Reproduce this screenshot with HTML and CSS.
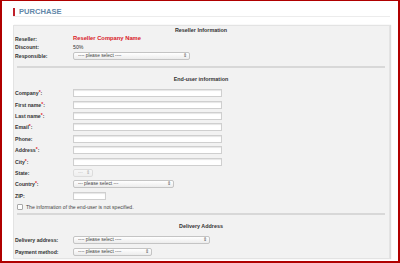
FILE: index.html
```html
<!DOCTYPE html>
<html lang="en">
<head>
    <meta charset="UTF-8">
    <title>Purchase</title>
    <link rel="stylesheet" href="styles.css">
</head>
<body>
    <div class="frame">
        <h1 class="page-title">PURCHASE</h1>
        <form class="panel">
            <h2 class="section-title first">Reseller Information</h2>
            <div class="rows rows-tight">
                <label>Reseller:</label>
                <span class="reseller">Reseller Company Name</span>
                <label>Discount:</label>
                <span class="value">50%</span>
                <label>Responsible:</label>
                <span class="sel w-resp"><select><option>---- please select ----</option></select></span>
            </div>

            <hr class="sep">

            <h2 class="section-title">End-user information</h2>
            <div class="rows">
                <label>Company<em>*</em>:</label>
                <input type="text" class="txt">
                <label>First name<em>*</em>:</label>
                <input type="text" class="txt">
                <label>Last name<em>*</em>:</label>
                <input type="text" class="txt">
                <label>Email<em>*</em>:</label>
                <input type="text" class="txt">
                <label>Phone:</label>
                <input type="text" class="txt">
                <label>Address<em>*</em>:</label>
                <input type="text" class="txt">
                <label>City<em>*</em>:</label>
                <input type="text" class="txt">
                <label>State:</label>
                <span class="sel w-state disabled"><select disabled><option>---</option></select></span>
                <label>Country<em>*</em>:</label>
                <span class="sel w-country"><select><option>--- please select ---</option></select></span>
                <label>ZIP:</label>
                <input type="text" class="txt zip">
                <div class="check-row">
                    <span class="check"></span>
                    <span>The information of the end-user is not specified.</span>
                </div>
            </div>

            <hr class="sep sep-low">

            <h2 class="section-title">Delivery Address</h2>
            <div class="rows">
                <label>Delivery address:</label>
                <span class="sel w-deliv"><select><option>---- please select ----</option></select></span>
                <label>Payment method:</label>
                <span class="sel w-pay"><select><option>---- please select ----</option></select></span>
            </div>
        </form>
    </div>
</body>
</html>
```

FILE: styles.css
```css
body {
    margin: 0;
    background: #ffffff;
    font-family: 'Liberation Sans', Arial, sans-serif;
    color: #333333;
}
.frame {
    height: 263px;
    box-sizing: border-box;
    border: solid #b00000;
    border-width: 1px 2px 2px 2px;
    padding: 6px 8px 3px 11px;
    display: flex;
    flex-direction: column;
}
.page-title {
    margin: 0 0 8px 0;
    height: 10px;
    box-sizing: border-box;
    padding: 1px 0 0 6px;
    border-bottom: 1px solid #ececec;
    font-size: 7.6px;
    line-height: 8px;
    font-weight: 700;
    color: #6287a8;
    position: relative;
}
/* red marker before the title */
.page-title::before {
    content: '';
    position: absolute;
    left: 0;
    top: 1px;
    width: 2px;
    height: 8px;
    background: #c0202a;
}
.panel {
    flex: 1;
    background: #f2f2f2;
    border: 1px solid #e3e3e3;
    box-shadow: 1px 0 1px #dddddd;
    padding: 0 2px 0 1px;
}
.section-title {
    margin: 7.5px 0 4px 0;
    height: 8.5px;
    line-height: 8.5px;
    text-align: center;
    font-size: 5.4px;
    font-weight: 700;
    color: #333333;
}
.section-title.first {
    margin: 0;
}
.rows {
    display: grid;
    grid-template-columns: 58px 1fr;
    grid-auto-rows: 11.4px;
    align-items: center;
}
.rows-tight {
    grid-auto-rows: 8.5px;
}
.rows label {
    font-size: 5.2px;
    line-height: 6px;
    font-weight: 700;
    color: #333333;
}
.rows label em {
    color: #e0202a;
    font-style: normal;
    font-size: 5px;
    line-height: 0;
    vertical-align: 1.5px;
}
.reseller {
    font-size: 5.8px;
    line-height: 7px;
    font-weight: 700;
    color: #d92128;
}
.value {
    font-size: 5.2px;
    line-height: 6px;
}
.txt {
    display: block;
    width: 149px;
    height: 8px;
    box-sizing: border-box;
    border: 1px solid #cfcfcf;
    box-shadow: inset 0 1px 1px #e6e6e6;
    background: #ffffff;
    padding: 0;
    margin: 0;
}
.txt.zip {
    width: 33px;
}
.sel {
    position: relative;
    display: block;
    height: 8px;
    font-size: 0;
}
.sel select {
    appearance: none;
    -webkit-appearance: none;
    display: block;
    width: 100%;
    height: 8px;
    box-sizing: border-box;
    margin: 0;
    padding: 0 0 0 4px;
    border: 1px solid #c4c4c4;
    border-radius: 2px;
    background: linear-gradient(#ffffff, #ececec);
    font-family: 'Liberation Sans', Arial, sans-serif;
    font-size: 4.8px;
    line-height: 6px;
    color: #444444;
}
.sel::after {
    content: '\21D5';
    position: absolute;
    right: 3px;
    top: 1px;
    font-size: 4.5px;
    line-height: 6px;
    color: #555555;
}
.sel.disabled select {
    color: #aaaaaa;
    background: linear-gradient(#fafafa, #eeeeee);
    border-color: #d4d4d4;
}
.sel.disabled::after {
    color: #aaaaaa;
}
.w-resp { width: 117px; }
.w-state { width: 20px; }
.w-country { width: 101px; }
.w-deliv { width: 137px; }
.w-pay { width: 79px; }
.check-row {
    grid-column: 1 / -1;
    display: flex;
    align-items: center;
    gap: 3px;
    padding-left: 2px;
    font-size: 5.1px;
    line-height: 6px;
    color: #444444;
}
.check {
    width: 4px;
    height: 4px;
    border: 1px solid #a8a8a8;
    border-radius: 1px;
    background: #ffffff;
}
.sep {
    margin: 5.5px 2px 0 2px;
    border: none;
    border-top: 2px solid #d8d8d8;
    height: 0;
}
.sep-low {
    margin-top: 0;
}
```
